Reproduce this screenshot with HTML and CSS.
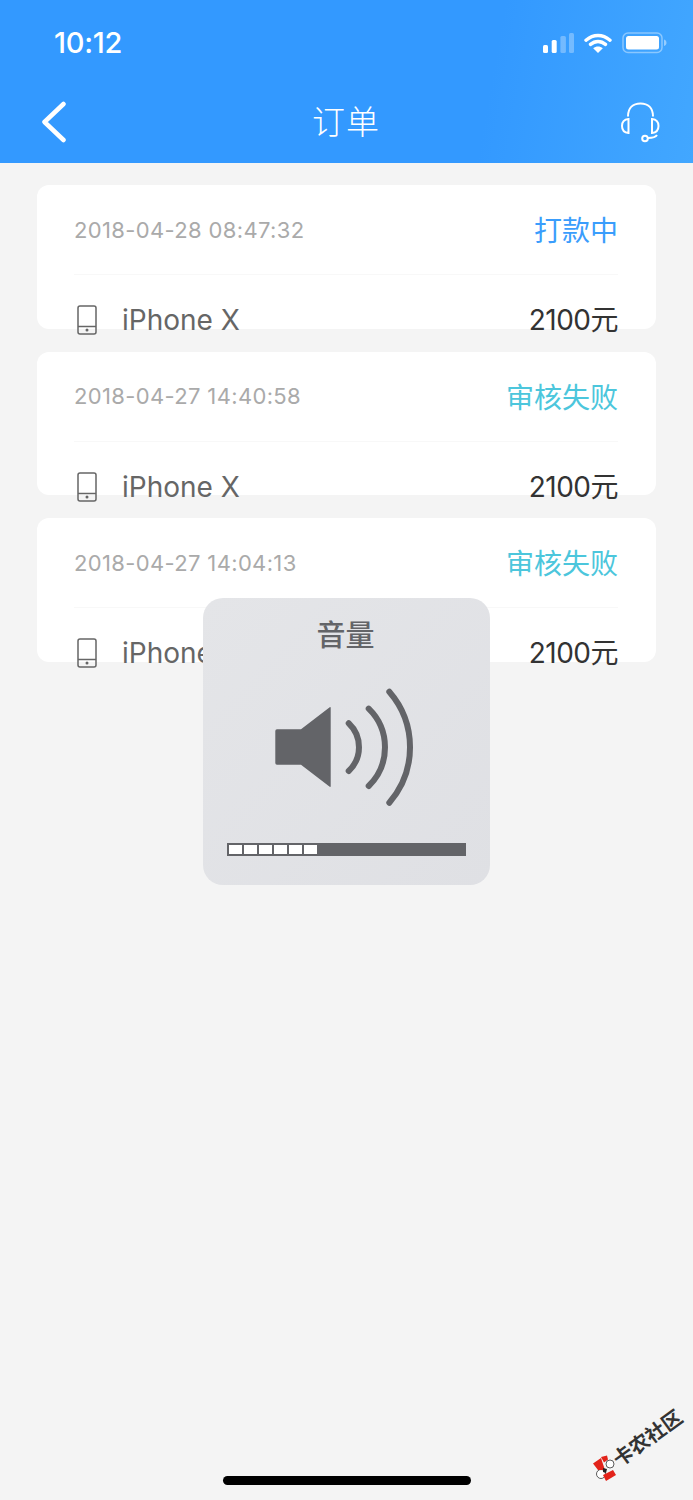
FILE: index.html
```html
<!DOCTYPE html>
<html lang="zh">
<head>
<meta charset="utf-8">
<title>订单</title>
<link rel="stylesheet" href="styles.css">
</head>
<body>
<div class="page">
  <header class="header">
    <div class="status">
      <span class="time">10:12</span>
      <div class="status-icons">
        <svg class="signal" width="31" height="20" viewBox="0 0 31 20"><rect x="0" y="12" width="5" height="8" rx="1.500" fill="#fff"/><rect x="8.700" y="7" width="5" height="13" rx="1.500" fill="#fff"/><rect x="17.400" y="3" width="5.500" height="17" rx="1.500" fill="#fff" fill-opacity=".3"/><rect x="26" y="0" width="5" height="20" rx="1.500" fill="#fff" fill-opacity=".3"/></svg>
        <svg class="wifi" width="28" height="20" viewBox="0 0 28 20"><path d="M2 7.200C9.300 .9 18.700 .9 26 7.200M6.500 11.400C11 7.500 17 7.500 21.500 11.400" fill="none" stroke="#fff" stroke-width="3.400" stroke-linecap="round"/><path d="M14 20l-4.800-4.800c2.800-2.200 6.800-2.200 9.600 0z" fill="#fff"/></svg>
        <svg class="battery" width="45" height="22" viewBox="0 0 45 22"><rect x="1" y="1" width="39" height="19.500" rx="5" fill="none" stroke="#fff" stroke-opacity=".4" stroke-width="1.500"/><rect x="4" y="4" width="33" height="13.500" rx="2.500" fill="#fff"/><path d="M42 7.500c1.700.5 2.500 1.700 2.500 3.300s-.8 2.800-2.500 3.300z" fill="#fff" fill-opacity=".45"/></svg>
      </div>
    </div>
    <div class="nav">
      <svg class="back" width="26" height="42" viewBox="0 0 26 42"><path d="M22.500 3L3.500 21 22.500 39" fill="none" stroke="#fff" stroke-width="4.500" stroke-linecap="round" stroke-linejoin="round"/></svg>
      <span class="nav-title">订单</span>
      <svg class="support" width="40" height="42" viewBox="0 0 40 42"><path d="M8 15.500C8 7 13 2.500 20.500 2.500S33 7 33 15.500" fill="none" stroke="#fff" stroke-width="2"/><path d="M8.500 18C4 18.500 2 21.500 2 25S4 31.500 8.500 32zM32 18C36.500 18.500 38.500 21.500 38.500 25S36.500 31.500 32 32z" fill="none" stroke="#fff" stroke-width="2"/><circle cx="25" cy="37.500" r="2.800" fill="none" stroke="#fff" stroke-width="2"/><path d="M28 37c4.500 0 7.500-.5 9-3" fill="none" stroke="#fff" stroke-width="2"/></svg>
    </div>
  </header>

  <main class="list">
    <article class="card">
      <div class="card-top"><time class="stamp">2018-04-28 08:47:32</time><span class="state state-pay">打款中</span></div>
      <div class="card-bottom">
        <svg class="device" width="20" height="30" viewBox="0 0 20 30"><rect x="1" y="1" width="18" height="28" rx="2" fill="none" stroke="#666" stroke-width="1.500"/><path d="M1 21.500h18" stroke="#666" stroke-width="1.500"/><circle cx="10" cy="25" r="1.500" fill="#666"/></svg>
        <span class="model">iPhone X</span><span class="price">2100元</span>
      </div>
    </article>
    <article class="card">
      <div class="card-top"><time class="stamp">2018-04-27 14:40:58</time><span class="state state-fail">审核失败</span></div>
      <div class="card-bottom">
        <svg class="device" width="20" height="30" viewBox="0 0 20 30"><rect x="1" y="1" width="18" height="28" rx="2" fill="none" stroke="#666" stroke-width="1.500"/><path d="M1 21.500h18" stroke="#666" stroke-width="1.500"/><circle cx="10" cy="25" r="1.500" fill="#666"/></svg>
        <span class="model">iPhone X</span><span class="price">2100元</span>
      </div>
    </article>
    <article class="card">
      <div class="card-top"><time class="stamp">2018-04-27 14:04:13</time><span class="state state-fail">审核失败</span></div>
      <div class="card-bottom">
        <svg class="device" width="20" height="30" viewBox="0 0 20 30"><rect x="1" y="1" width="18" height="28" rx="2" fill="none" stroke="#666" stroke-width="1.500"/><path d="M1 21.500h18" stroke="#666" stroke-width="1.500"/><circle cx="10" cy="25" r="1.500" fill="#666"/></svg>
        <span class="model">iPhone X</span><span class="price">2100元</span>
      </div>
    </article>
  </main>

  <aside class="hud">
    <div class="hud-title">音量</div>
    <svg class="hud-icon" width="146" height="124" viewBox="0 0 146 124"><path d="M7 44.300H31L59.700 22.200a.7.7 0 0 1 1 .6v78.400a.7.7 0 0 1-1 .6L31 79.700H7a1.700 1.700 0 0 1-1.700-1.700V46a1.700 1.700 0 0 1 1.700-1.700z" fill="#636468"/><path d="M78.700 38.300A32.800 32.800 0 0 1 78.700 86M98.700 23.700A54 54 0 0 1 98.700 101M119.300 6.700A84.700 84.700 0 0 1 119.300 117.700" fill="none" stroke="#636468" stroke-width="6" stroke-linecap="round"/></svg>
    <div class="hud-bar"><i></i><i></i><i></i><i></i><i></i><i></i></div>
  </aside>

  <div class="home-bar"></div>

  <div class="mark">
    <svg class="mark-logo" width="24" height="26" viewBox="0 0 24 26"><circle cx="17" cy="9" r="4" fill="#fff" stroke="#333" stroke-width=".8"/><circle cx="8" cy="19" r="4.500" fill="#fff" stroke="#333" stroke-width=".8"/><path d="M0 8.500L8 3 12 15 5 15zM8 2l6-1.500 1 4-4 3zM10 20l10-5 3 5-10 6z" fill="#e2231a"/><path d="M10 13l4 1-1 4-3-1z" fill="#222"/></svg>
    <span class="mark-text">卡农社区</span>
  </div>
</div>
</body>
</html>
```
FILE: styles.css
```css
* { box-sizing: border-box; }
html, body { margin: 0; padding: 0; }
body { font-family: "Inter", "Noto Sans CJK SC", sans-serif; background: #f4f4f4; }
.page { position: relative; width: 693px; height: 1500px; overflow: hidden; background: #f4f4f4; }

.header { height: 163px; background: linear-gradient(100deg, #3399ff 0%, #3399ff 70%, #42a7ff 100%); color: #fff; }
.status { height: 81px; padding: 24px 26px 0 54px; display: flex; justify-content: space-between; align-items: flex-start; }
.time { font-size: 29px; line-height: 38px; font-weight: 500; letter-spacing: -.3px; }
.status-icons { display: flex; align-items: center; gap: 10px; padding-top: 8px; }
.nav { height: 82px; padding: 0 33px 0 41px; display: flex; justify-content: space-between; align-items: center; }
.back { display: block; }
.nav-title { font: 300 33px/42px "Noto Sans CJK SC", sans-serif; letter-spacing: 1px; margin: 0 0 5px 5px; }
.support { display: block; }

.list { padding: 22px 37px 0; display: flex; flex-direction: column; gap: 23px; }
.card { height: 143.500px; background: #fff; border-radius: 12px; padding: 0 38px 0 37px; }
.card-top { height: 90px; display: flex; justify-content: space-between; align-items: center; border-bottom: 1px solid #f8f8f8; }
.stamp { font-size: 22px; font-weight: 400; color: #aaa; letter-spacing: .35px; }
.state { font: 400 28px/36px "Noto Sans CJK SC", sans-serif; margin-bottom: 1px; }
.state-pay { color: #3a9dfc; }
.state-fail { color: #4cc6dc; }
.card-bottom { height: 90px; display: flex; align-items: center; }
.device { display: block; margin-left: 3px; }
.model { margin-left: 25px; font-size: 28px; color: #666; }
.price { margin-left: auto; margin-bottom: 4px; font-size: 28px; color: #333; letter-spacing: -.5px; }

.hud { position: absolute; left: 203px; top: 598px; width: 287px; height: 287px; border-radius: 20px; background: linear-gradient(135deg, #e4e5e8, #dfe0e4); padding: 21px 24px 0; display: flex; flex-direction: column; align-items: center; }
.hud-title { font: 500 29px/28px "Noto Sans CJK SC", sans-serif; color: #636468; margin-left: -2px; }
.hud-icon { display: block; margin: 38px 0 0 -7px; }
.hud-bar { margin-top: 34px; width: 239px; height: 13px; background: #636468; padding: 2px; display: flex; gap: 2px; align-self: flex-start; }
.hud-bar i { display: block; width: 13px; height: 9px; background: #fff; }

.home-bar { position: absolute; left: 223px; top: 1476px; width: 248px; height: 9px; border-radius: 5px; background: #000; }

.mark { position: absolute; left: 593px; top: 1455px; display: flex; align-items: center; transform: rotate(-36deg); transform-origin: 12px 13px; }
.mark-logo { display: block; transform: rotate(36deg); }
.mark-text { font: 700 20px/24px "Noto Sans CJK SC", sans-serif; color: #333; white-space: nowrap; }
```
